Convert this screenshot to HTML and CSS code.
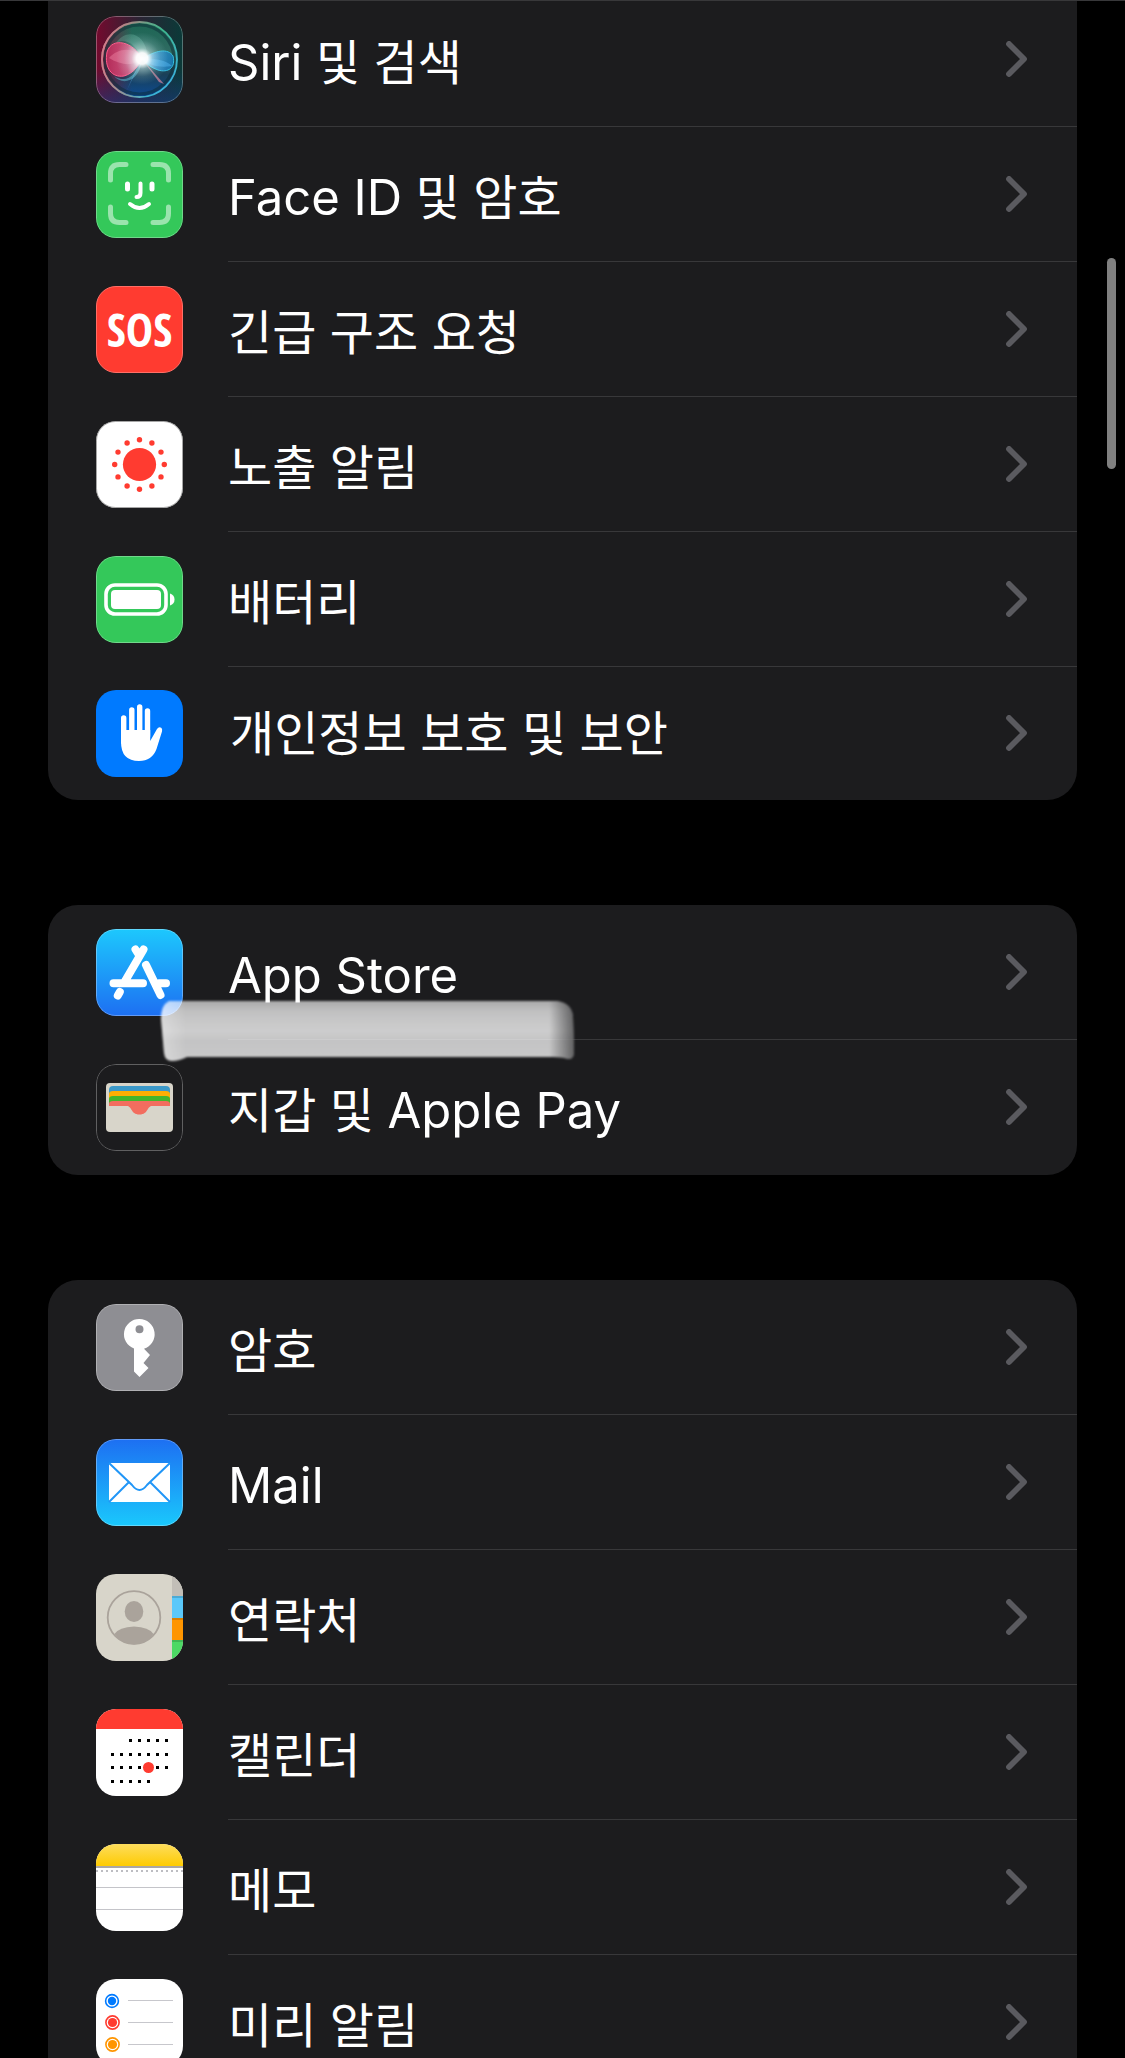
FILE: index.html
```html
<!DOCTYPE html>
<html lang="ko">
<head>
<meta charset="utf-8">
<meta name="viewport" content="width=device-width, initial-scale=1">
<title>설정</title>
<link rel="stylesheet" href="styles.css">
</head>
<body>
<svg class="defs" aria-hidden="true">
  <defs>
    <symbol id="chevron" viewBox="0 0 22 36"><path d="M3 3 18 18 3 33" fill="none" stroke="#5a5a5f" stroke-width="5.800" stroke-linecap="round" stroke-linejoin="round"/></symbol>
    <linearGradient id="blueDown" x1="0" y1="0" x2="0" y2="1"><stop offset="0" stop-color="#1dc8fd"/><stop offset="1" stop-color="#1d6ff2"/></linearGradient>
    <linearGradient id="blueUp" x1="0" y1="0" x2="0" y2="1"><stop offset="0" stop-color="#1d6ff2"/><stop offset="1" stop-color="#1ac8fc"/></linearGradient>
    <linearGradient id="noteTop" x1="0" y1="0" x2="0" y2="1"><stop offset="0" stop-color="#fddd5d"/><stop offset="1" stop-color="#fecb02"/></linearGradient>
    <linearGradient id="siriBg" x1="0" y1="0" x2="1" y2="0"><stop offset="0" stop-color="#740a2e"/><stop offset=".5" stop-color="#2b2434"/><stop offset="1" stop-color="#0a3a38"/></linearGradient>
    <linearGradient id="siriLow" x1="0" y1="0" x2="0" y2="1"><stop offset=".6" stop-color="#123a78" stop-opacity="0"/><stop offset="1" stop-color="#163a80" stop-opacity=".6"/></linearGradient>
    <linearGradient id="siriOrb" x1="0" y1="0" x2="0" y2="1"><stop offset="0" stop-color="#1c6653"/><stop offset=".4" stop-color="#2f6b62"/><stop offset=".7" stop-color="#1a4058"/><stop offset="1" stop-color="#0c4a92"/></linearGradient>
    <linearGradient id="siriShade" x1="0" y1="0" x2="1" y2="0"><stop offset="0" stop-color="#6e1a38" stop-opacity=".9"/><stop offset=".4" stop-color="#6e1a38" stop-opacity="0"/></linearGradient>
    <linearGradient id="siriRing" x1="0" y1="0" x2="1" y2="1"><stop offset="0" stop-color="#c07a7c"/><stop offset=".45" stop-color="#3fb68d"/><stop offset="1" stop-color="#38b2f5"/></linearGradient>
    <linearGradient id="siriRingL" x1="0" y1="0" x2="1" y2="0"><stop offset="0" stop-color="#d8788a"/><stop offset=".6" stop-color="#d8788a" stop-opacity="0"/></linearGradient>
    <linearGradient id="siriPink" x1="0" y1="0" x2="1" y2="0"><stop offset="0" stop-color="#c02c5c"/><stop offset=".6" stop-color="#e0527f"/><stop offset="1" stop-color="#ffd4e4"/></linearGradient>
    <linearGradient id="siriBlue" x1="1" y1="0" x2="0" y2="0"><stop offset="0" stop-color="#157fc4"/><stop offset=".6" stop-color="#3fa0e4"/><stop offset="1" stop-color="#c6f2ff"/></linearGradient>
    <radialGradient id="siriGlow"><stop offset="0" stop-color="#fff"/><stop offset=".22" stop-color="#fff" stop-opacity=".95"/><stop offset=".4" stop-color="#e8ffff" stop-opacity=".45"/><stop offset=".7" stop-color="#cff" stop-opacity=".14"/><stop offset="1" stop-color="#bff" stop-opacity="0"/></radialGradient>
    <linearGradient id="paintV" x1="0" y1="0" x2="0" y2="1"><stop offset="0" stop-color="#fff" stop-opacity=".62"/><stop offset=".16" stop-color="#fff" stop-opacity=".72"/><stop offset=".3" stop-color="#fff" stop-opacity=".75"/><stop offset=".5" stop-color="#fff" stop-opacity=".78"/><stop offset=".66" stop-color="#fff" stop-opacity=".74"/><stop offset="1" stop-color="#fff" stop-opacity=".76"/></linearGradient>
    <linearGradient id="paintEnds" x1="0" y1="0" x2="1" y2="0"><stop offset="0" stop-color="#fff" stop-opacity=".3"/><stop offset=".06" stop-color="#fff" stop-opacity="0"/><stop offset=".94" stop-color="#1c1c1e" stop-opacity="0"/><stop offset="1" stop-color="#1c1c1e" stop-opacity=".6"/></linearGradient>
    <filter id="paintSoft" x="-5%" y="-10%" width="110%" height="120%"><feGaussianBlur stdDeviation="1.200"/></filter>
  </defs>
</svg>
<main class="screen">
  <nav class="groups" aria-label="설정">
    <ul class="card card-scrolled">
      <li class="row"><a class="link" href="#siri">
        <svg class="icon" viewBox="0 0 87 87" aria-hidden="true">
          <rect width="87" height="87" fill="url(#siriBg)"/><rect width="87" height="87" fill="url(#siriLow)"/>
          <circle cx="43.500" cy="43.500" r="37.500" fill="url(#siriOrb)"/>
          <circle cx="43.500" cy="43.500" r="37.500" fill="url(#siriShade)"/>
          <circle cx="43.500" cy="43.500" r="34.500" fill="none" stroke="#0c2c36" stroke-opacity=".5" stroke-width="3"/>
          <circle cx="43.500" cy="43.500" r="37.500" fill="none" stroke="url(#siriRing)" stroke-width="1.800"/>
          <circle cx="43.500" cy="43.500" r="37.500" fill="none" stroke="url(#siriRingL)" stroke-width="1.800"/>
          <path d="M20 27C30 12 50 16 52 42L46 43C40 28 30 22 20 27Z" fill="#7fc9b4" fill-opacity=".28"/>
          <path d="M46 43C40 60 30 68 18 60 26 70 44 66 46 43Z" fill="#62c4d8" fill-opacity=".5"/>
          <path d="M46 43C38 26 16 20 11 36 8 52 16 62 28 60 38 57 42 50 46 43Z" fill="url(#siriPink)" fill-opacity=".88" stroke="#ff5c8c" stroke-width="1"/>
          <path d="M46 43C38 30 22 32 13 42 26 50 38 50 46 43Z" fill="#ff9cb8" fill-opacity=".35"/>
          <path d="M46 43C60 34 72 32 77 40 80 52 72 57 62 54 56 52 50 48 46 43Z" fill="url(#siriBlue)" fill-opacity=".75" stroke="#36bfe0" stroke-width="1"/>
          <path d="M46 43C58 42 70 44 76 50 64 52 54 50 46 43Z" fill="#5cc0ff" fill-opacity=".4"/>
          <path d="M46 43 68 68 63 66Z" fill="#e88ca4" fill-opacity=".65"/>
          <path d="M46 43 31 74 38 58Z" fill="#58b0f0" fill-opacity=".6"/>
          <circle cx="46" cy="42.500" r="26" fill="url(#siriGlow)"/>
          <rect class="rim" x=".5" y=".5" width="86" height="86" rx="19"/>
        </svg>
        <span class="label"><span class="latin">Siri</span> 및 검색</span><svg class="chev" aria-hidden="true"><use href="#chevron"/></svg></a></li>
      <li class="row"><a class="link" href="#faceid">
        <svg class="icon" viewBox="0 0 87 87" aria-hidden="true">
          <rect width="87" height="87" fill="#34c85a"/>
          <path d="M14.500 29V22.500Q14.500 13.500 23.500 13.500H30M57 13.500H63.500Q72.500 13.500 72.500 22.500V29M72.500 56V62.500Q72.500 71.500 63.500 71.500H57M30 71.500H23.500Q14.500 71.500 14.500 62.500V56" fill="none" stroke="#fff" stroke-opacity=".5" stroke-width="5" stroke-linecap="round"/>
          <path d="M31.500 33V38M56 33V38" stroke="#fff" stroke-width="5" stroke-linecap="round"/>
          <path d="M44.500 32.500V42Q44.500 46 40.500 46" fill="none" stroke="#fff" stroke-width="4" stroke-linecap="round"/>
          <path d="M34 53Q43.500 61 53 53" fill="none" stroke="#fff" stroke-width="4" stroke-linecap="round"/>
          <rect class="rim" x=".5" y=".5" width="86" height="86" rx="19"/>
        </svg>
        <span class="label"><span class="latin">Face ID</span> 및 암호</span><svg class="chev" aria-hidden="true"><use href="#chevron"/></svg></a></li>
      <li class="row"><a class="link" href="#sos">
        <span class="icon icon-sos" aria-hidden="true">SOS</span>
        <span class="label">긴급 구조 요청</span><svg class="chev" aria-hidden="true"><use href="#chevron"/></svg></a></li>
      <li class="row"><a class="link" href="#exposure">
        <svg class="icon" viewBox="0 0 87 87" aria-hidden="true">
          <rect width="87" height="87" fill="#fff"/>
          <g fill="#ff3b30"><circle cx="43.500" cy="43.500" r="16.600"/>
          <circle cx="43.500" cy="18.700" r="2.700"/><circle cx="55.900" cy="22" r="2.700"/><circle cx="65" cy="31.100" r="2.700"/><circle cx="68.300" cy="43.500" r="2.700"/><circle cx="65" cy="55.900" r="2.700"/><circle cx="55.900" cy="65" r="2.700"/><circle cx="43.500" cy="68.300" r="2.700"/><circle cx="31.100" cy="65" r="2.700"/><circle cx="22" cy="55.900" r="2.700"/><circle cx="18.700" cy="43.500" r="2.700"/><circle cx="22" cy="31.100" r="2.700"/><circle cx="31.100" cy="22" r="2.700"/></g>
          <rect class="rim-dark" x=".5" y=".5" width="86" height="86" rx="19"/>
        </svg>
        <span class="label">노출 알림</span><svg class="chev" aria-hidden="true"><use href="#chevron"/></svg></a></li>
      <li class="row"><a class="link" href="#battery">
        <svg class="icon" viewBox="0 0 87 87" aria-hidden="true">
          <rect width="87" height="87" fill="#34c85a"/>
          <rect x="10" y="29" width="60" height="29" rx="9" fill="none" stroke="#fff" stroke-width="3.600"/>
          <rect x="15" y="34" width="50" height="19" rx="4" fill="#fff"/>
          <path d="M74 37.500Q78.500 39 78.500 43.500T74 49.500Z" fill="#fff"/>
          <rect class="rim" x=".5" y=".5" width="86" height="86" rx="19"/>
        </svg>
        <span class="label">배터리</span><svg class="chev" aria-hidden="true"><use href="#chevron"/></svg></a></li>
      <li class="row row-short"><a class="link" href="#privacy">
        <svg class="icon" viewBox="0 0 87 87" aria-hidden="true">
          <rect width="87" height="87" fill="#007aff"/>
          <path d="M27.700 28V52M35.800 20V44M43.700 17V44M51.500 21V46" stroke="#fff" stroke-width="5.400" stroke-linecap="round"/>
          <path d="M25 43 30 40H54.200V51L61 39Q63 36 65.500 38 66.500 39 66 41.500L60.500 59Q56 71 43 71 25 71 25 52Z" fill="#fff"/>
        </svg>
        <span class="label">개인정보 보호 및 보안</span><svg class="chev" aria-hidden="true"><use href="#chevron"/></svg></a></li>
    </ul>
    <div class="card-wrap">
      <ul class="card">
        <li class="row"><a class="link" href="#appstore">
          <svg class="icon" viewBox="0 0 87 87" aria-hidden="true">
            <rect width="87" height="87" fill="url(#blueDown)"/>
            <g fill="none" stroke="#fff" stroke-width="8" stroke-linecap="round"><path d="M47.500 20.500 28.500 53M39.500 20.500 42 24.500M17.500 54.300H47M63 54.300H70M50 36 64.500 66M23.800 63 21.800 66.500"/></g>
            <rect class="rim" x=".5" y=".5" width="86" height="86" rx="19"/>
          </svg>
          <span class="label"><span class="latin">App Store</span></span><svg class="chev" aria-hidden="true"><use href="#chevron"/></svg></a></li>
        <li class="row"><a class="link" href="#wallet">
          <svg class="icon" viewBox="0 0 87 87" aria-hidden="true">
            <rect width="87" height="87" fill="#1c1c1e"/>
            <rect x="10" y="19" width="67" height="49" rx="4" fill="#d8d5ca"/>
            <path d="M13 42V26Q13 22 17 22H70Q74 22 74 26V42Z" fill="#3b99c9"/>
            <path d="M13 42V30Q13 27 17 27H70Q74 27 74 30V42Z" fill="#feae03"/>
            <path d="M13 42V35Q13 32 17 32H70Q74 32 74 35V42Z" fill="#45b52c"/>
            <path d="M13 42V40Q13 37 17 37H70Q74 37 74 40V42Z" fill="#f26d5f"/>
            <path d="M29 41.500C37 41.500 34 50.500 43.500 50.500S50 41.500 58 41.500Z" fill="#f26d5f"/>
            <rect class="rim" x=".5" y=".5" width="86" height="86" rx="19"/>
          </svg>
          <span class="label">지갑 및 <span class="latin">Apple Pay</span></span><svg class="chev" aria-hidden="true"><use href="#chevron"/></svg></a></li>
      </ul>
      <svg class="smear" viewBox="0 0 425 70" aria-hidden="true">
        <g filter="url(#paintSoft)">
          <path d="M14 6Q6 10 6 24L9 58Q10 66 17 66 24 66 32 62H398Q408 62 413 64 419 65 419 56L418 22Q417 8 402 6Z" fill="url(#paintV)"/>
          <path d="M14 6Q6 10 6 24L9 58Q10 66 17 66 24 66 32 62H398Q408 62 413 64 419 65 419 56L418 22Q417 8 402 6Z" fill="url(#paintEnds)"/>
        </g>
      </svg>
    </div>
    <ul class="card">
      <li class="row"><a class="link" href="#passwords">
        <svg class="icon" viewBox="0 0 87 87" aria-hidden="true">
          <rect width="87" height="87" fill="#8e8e93"/>
          <path fill-rule="evenodd" d="M43.500 15A15.200 15.200 0 0 1 48 44.700L54 51 47.500 59 52.500 64 43.500 73 38 67.500V44.500A15.200 15.200 0 0 1 43.500 15ZM43.500 21.200A4 4 0 1 0 43.500 29.200 4 4 0 1 0 43.500 21.200Z" fill="#fff"/>
          <rect class="rim" x=".5" y=".5" width="86" height="86" rx="19"/>
        </svg>
        <span class="label">암호</span><svg class="chev" aria-hidden="true"><use href="#chevron"/></svg></a></li>
      <li class="row"><a class="link" href="#mail">
        <svg class="icon" viewBox="0 0 87 87" aria-hidden="true">
          <rect width="87" height="87" fill="url(#blueUp)"/>
          <rect x="13" y="24" width="61" height="39" rx="2" fill="#fff"/>
          <path d="M13 24 36 46Q43.500 56 51 46L74 24M13 63 32.500 43.500M74 63 54.500 43.500" fill="none" stroke="#2196f7" stroke-width="2"/>
          <rect class="rim" x=".5" y=".5" width="86" height="86" rx="19"/>
        </svg>
        <span class="label"><span class="latin">Mail</span></span><svg class="chev" aria-hidden="true"><use href="#chevron"/></svg></a></li>
      <li class="row"><a class="link" href="#contacts">
        <svg class="icon" viewBox="0 0 87 87" aria-hidden="true">
          <rect width="87" height="87" fill="#d8d5ca"/>
          <rect x="76" width="11" height="22" fill="#c2beb7"/><rect x="76" y="22" width="11" height="22" fill="#5ac8fa"/><rect x="76" y="44" width="11" height="22" fill="#ff9500"/><rect x="76" y="66" width="11" height="21" fill="#4cd964"/>
          <path d="M76 23H87M76 45H87M76 67H87" stroke="#000" stroke-opacity=".15" stroke-width="2"/>
          <circle cx="38" cy="43.500" r="26.300" fill="none" stroke="#aaa39b" stroke-width="1.800"/>
          <ellipse cx="38" cy="37.500" rx="9.300" ry="10.500" fill="#aaa39b"/>
          <path d="M18.500 60Q23 53 38 52.500 53 53 57.500 60 50 70.500 38 70.500T18.500 60Z" fill="#aaa39b"/>
        </svg>
        <span class="label">연락처</span><svg class="chev" aria-hidden="true"><use href="#chevron"/></svg></a></li>
      <li class="row"><a class="link" href="#calendar">
        <svg class="icon" viewBox="0 0 87 87" aria-hidden="true">
          <rect width="87" height="87" fill="#fff"/><rect width="87" height="20" fill="#ff3b30"/>
          <path d="M33 31.500H73M15 45.500H73M15 58.500H73M15 72.500H55" stroke="#000" stroke-width="3" stroke-dasharray="3 6"/>
          <circle cx="52.500" cy="58.500" r="5.500" fill="#ff3b30"/>
        </svg>
        <span class="label">캘린더</span><svg class="chev" aria-hidden="true"><use href="#chevron"/></svg></a></li>
      <li class="row"><a class="link" href="#notes">
        <svg class="icon" viewBox="0 0 87 87" aria-hidden="true">
          <rect width="87" height="87" fill="#fff"/><rect width="87" height="22" fill="url(#noteTop)"/>
          <path d="M0 23H87" stroke="#aaa7a5" stroke-width="2"/>
          <path d="M0 27H87" stroke="#bdbdc2" stroke-width="2" stroke-dasharray="2 3"/>
          <path d="M0 43.500H87M0 65.500H87" stroke="#c4c4c9"/>
        </svg>
        <span class="label">메모</span><svg class="chev" aria-hidden="true"><use href="#chevron"/></svg></a></li>
      <li class="row"><a class="link" href="#reminders">
        <svg class="icon" viewBox="0 0 87 87" aria-hidden="true">
          <rect width="87" height="87" fill="#fff"/>
          <g stroke-width="1.600" fill="none"><circle cx="16" cy="22" r="6.400" stroke="#007aff"/><circle cx="16.500" cy="43.500" r="6.600" stroke="#ff3b30"/><circle cx="16.500" cy="65.500" r="6.600" stroke="#ff9500"/></g>
          <circle cx="16" cy="22" r="4.200" fill="#007aff"/><circle cx="16.500" cy="43.500" r="4.600" fill="#ff3b30"/><circle cx="16.500" cy="65.500" r="4.600" fill="#ff9500"/>
          <path d="M32 21.500H77M32 43.500H77M32 65.500H77" stroke="#c7c7cc"/>
        </svg>
        <span class="label">미리 알림</span><svg class="chev" aria-hidden="true"><use href="#chevron"/></svg></a></li>
    </ul>
  </nav>
  <div class="scroll-thumb" aria-hidden="true"></div>
</main>
</body>
</html>
```
FILE: styles.css
```css
* { box-sizing: border-box; }

body {
  margin: 0;
  background: #000;
  color: #fff;
  font-family: Inter, "Noto Sans CJK KR", sans-serif;
}

.defs { position: absolute; width: 0; height: 0; }

.screen {
  position: relative;
  height: 100vh;
  overflow: hidden;
  border-top: 1px solid #38383a;
}

.groups {
  display: flex;
  flex-direction: column;
  gap: 105px;
  padding: 0 48px;
}

.card {
  margin: 0;
  padding: 0;
  list-style: none;
  border-radius: 30px;
  background: #1c1c1e;
}

/* The list is scrolled: the first card runs off the top edge. */
.card-scrolled {
  margin-top: -9px;
  border-top-left-radius: 0;
  border-top-right-radius: 0;
}

.card-wrap { position: relative; }

.link {
  display: flex;
  align-items: center;
  height: 135px;
  padding-left: 48px;
  color: inherit;
  text-decoration: none;
}

.row {
  background: linear-gradient(#38383a, #38383a) right bottom / calc(100% - 180px) 1px no-repeat;
}

.row:last-child { background: none; }

.icon {
  flex: none;
  width: 87px;
  height: 87px;
  border-radius: 20px;
  overflow: hidden;
}

.icon-sos {
  display: flex;
  align-items: center;
  justify-content: center;
  padding-bottom: 2px;
  border: 1px solid #ff6e66;
  background: #ff3b30;
  font: bold 46px/1 "Open Sans Condensed", "Liberation Sans Narrow", Roboto, sans-serif;
}

.rim { fill: none; stroke: #fff; stroke-opacity: .3; }
.rim-dark { fill: none; stroke: #000; stroke-opacity: .35; }

.label {
  flex: 1;
  margin-left: 45px;
  padding-top: 6px;
  font-size: 48px;
  line-height: 64px;
  white-space: nowrap;
}

.latin { font-size: 49px; }

.row-short .link { height: 133px; }

.row-short .label {
  margin-left: 47px;
  padding-top: 0;
}

.chev {
  flex: none;
  width: 22px;
  height: 36px;
  margin: 0 49px 2px 0;
}

.smear {
  position: absolute;
  left: 107px;
  top: 90px;
  width: 425px;
  height: 70px;
  pointer-events: none;
}

.scroll-thumb {
  position: absolute;
  top: 257px;
  right: 9px;
  width: 9px;
  height: 211px;
  border-radius: 5px;
  background: #808080;
}
```
